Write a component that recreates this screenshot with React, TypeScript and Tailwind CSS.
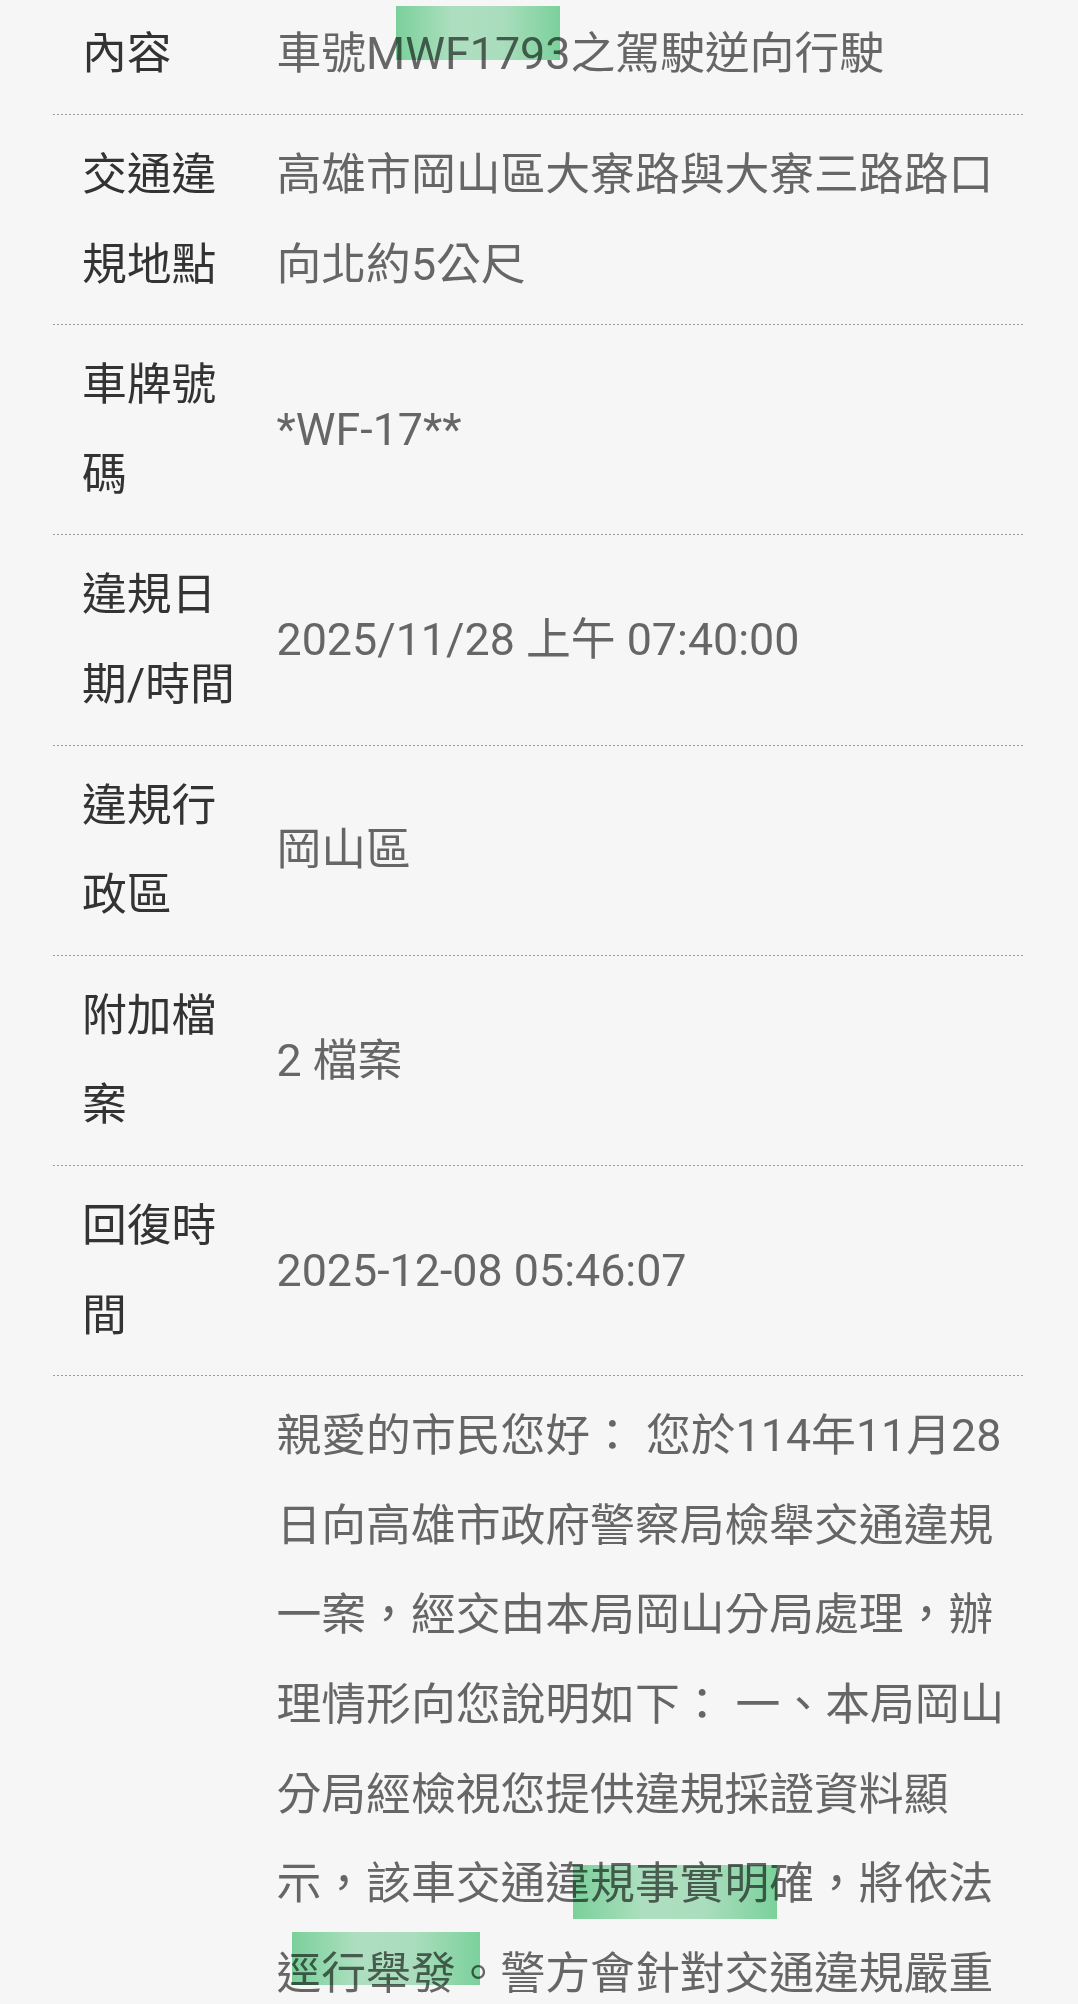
const rows: [string, string][] = [
  ['內容', '車號MWF1793之駕駛逆向行駛'],
  ['交通違規地點', '高雄市岡山區大寮路與大寮三路路口向北約5公尺'],
  ['車牌號碼', '*WF-17**'],
  ['違規日期/時間', '2025/11/28 上午 07:40:00'],
  ['違規行政區', '岡山區'],
  ['附加檔案', '2 檔案'],
  ['回復時間', '2025-12-08 05:46:07'],
]

const reply =
  '親愛的市民您好： 您於114年11月28日向高雄市政府警察局檢舉交通違規一案，經交由本局岡山分局處理，辦理情形向您說明如下： 一、本局岡山分局經檢視您提供違規採證資料顯示，該車交通違規事實明確，將依法逕行舉發。警方會針對交通違規嚴重路段加強執法，以維護用路人安全。 二、感謝您的檢舉與對交通安全的關心。'

function Highlight({ className }: { className: string }) {
  return (
    <div
      className={`pointer-events-none absolute bg-[linear-gradient(to_right,#7fd8a0,#b4e7c7_35%,#b0e5c4_65%,#80d9a1)] mix-blend-multiply ${className}`}
    />
  )
}

function Divider() {
  return <div className="h-px bg-[linear-gradient(to_right,#9c9c9c_50%,transparent_50%)] bg-[length:4px_1px] bg-repeat-x" />
}

export default function App() {
  return (
    <div className="relative min-h-screen overflow-hidden bg-[#f6f6f6] font-[Roboto,'Noto_Sans_CJK_TC',sans-serif] text-[44.8px] leading-[89.6px]">
      <div className="mx-[53px] mt-[-5.6px]">
        {rows.map(([label, value]) => (
          <div key={label}>
            <div className="grid grid-cols-[223.5px_1fr] items-center py-[15px]">
              <div className="pl-[29px] pr-[29.5px] text-[#333]">{label}</div>
              <div className="pr-[14px] text-[#666]">{value}</div>
            </div>
            <Divider />
          </div>
        ))}
        <div className="grid grid-cols-[223.5px_1fr] items-start py-[15px]">
          <div />
          <div className="pr-[14px] text-[#666]">{reply}</div>
        </div>
      </div>

      <Highlight className="left-[396px] top-[6px] h-[54px] w-[164px]" />
      <Highlight className="left-[573px] top-[1865px] h-[54px] w-[204px]" />
      <Highlight className="left-[292px] top-[1932px] h-[53px] w-[188px]" />
    </div>
  )
}
